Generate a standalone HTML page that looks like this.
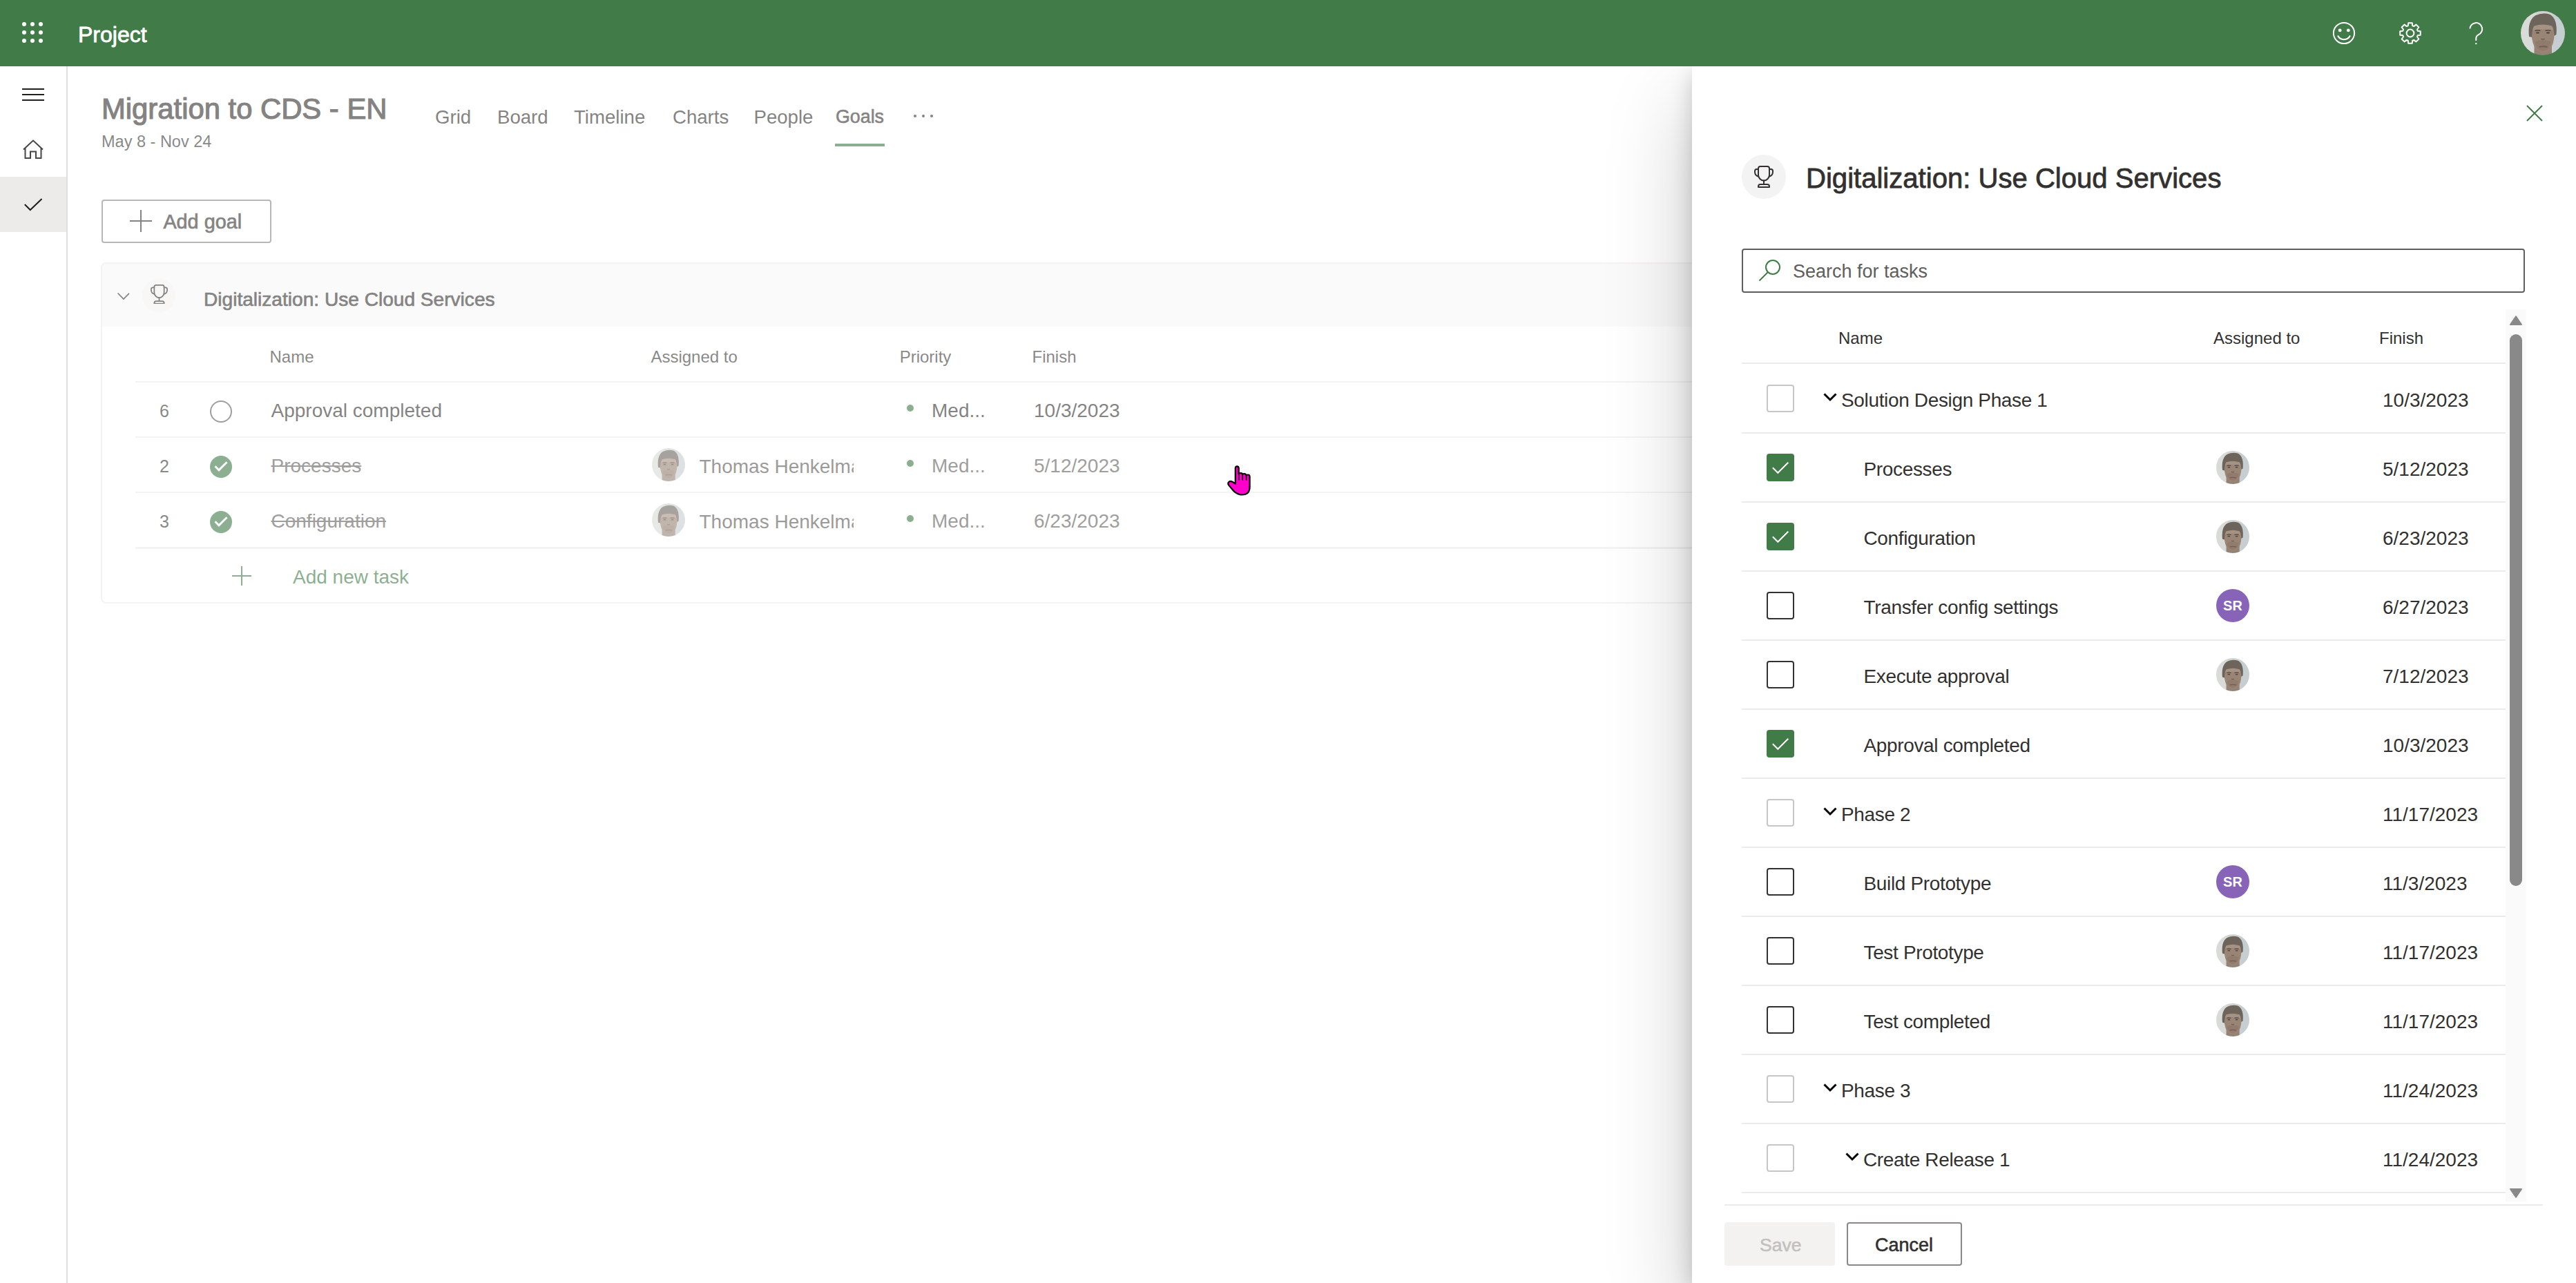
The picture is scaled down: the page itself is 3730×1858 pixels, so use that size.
<!DOCTYPE html><html><head><meta charset="utf-8"><style>
html,body{margin:0;padding:0;width:3730px;height:1858px;overflow:hidden;background:#fff}
body{position:relative;font-family:"Liberation Sans",sans-serif}
.t{position:absolute;line-height:1;white-space:nowrap}
</style></head><body>
<svg width="0" height="0" style="position:absolute"><defs>
<symbol id="trophy" viewBox="0 0 28 32"><g fill="none" stroke="#323130" stroke-width="2" stroke-linejoin="round" stroke-linecap="round">
<path d="M6 4Q6 1 9 1H19Q22 1 22 4V13A8 8.5 0 0 1 6 13Z"/><path d="M6 5H3.5Q1 5 1 8V9Q1 14 6 15.5"/><path d="M22 5H24.5Q27 5 27 8V9Q27 14 22 15.5"/>
<path d="M14 21.5V27"/><path d="M6 31H22V30Q22 27 19 27H9Q6 27 6 30Z"/></g></symbol>
<clipPath id="cc"><circle cx="32" cy="32" r="32"/></clipPath>
<filter id="bl" x="-10%" y="-10%" width="120%" height="120%"><feGaussianBlur stdDeviation="0.7"/></filter><symbol id="face" viewBox="0 0 64 64"><g clip-path="url(#cc)"><g filter="url(#bl)"><rect width="64" height="64" fill="#cfd3d1"/><rect x="0" width="22" height="64" fill="#d8dbd8"/><rect x="46" width="18" height="64" fill="#c6ced1"/>
<path d="M19.5 48H45V64H19.5Z" fill="#948274"/>
<path d="M15.5 25Q16 19 32 18.5Q48 19 48.5 26Q49.5 42 45 51Q41 60.5 32 60.5Q23.5 60.5 19.5 51Q15 42 15.5 25Z" fill="#9a8575"/>
<path d="M17 22Q32 17 48 22L47.5 28Q32 25 16.5 28Z" fill="#a69282"/>
<path d="M21 44Q32 40 43.5 44Q43 56 32 58Q21 56 21 44Z" fill="#8c786b" opacity=".8"/>
<path d="M12 37Q9.5 14 21 6.5Q32 1.5 42.5 5Q53.5 11.5 51.5 34L48.5 36Q48 25 45 21.5Q32 17.5 19.5 21.5Q16.5 25 16 38Z" fill="#6d655b"/>
<path d="M20.5 28.5Q24.5 27 28.5 28.5M35.5 28.5Q39.5 27 43.5 28.5" stroke="#4f4a44" stroke-width="1.6" fill="none"/>
<ellipse cx="24.5" cy="31.5" rx="2.6" ry="1.2" fill="#4a4a47"/><ellipse cx="39.5" cy="31.5" rx="2.6" ry="1.2" fill="#4a4a47"/>
<path d="M29.5 40Q32 42 34.5 40" stroke="#6d5a50" stroke-width="1.4" fill="none"/>
<path d="M26.5 52Q32 50.5 38.5 52" stroke="#7a5a52" stroke-width="1.8" fill="none"/></g></g></symbol>
</defs></svg>
<div style="position:absolute;left:0px;top:0px;width:3730px;height:96px;background:#417b48"></div><div style="position:absolute;left:32px;top:32px;width:6px;height:6px;background:#fff;border-radius:50%"></div><div style="position:absolute;left:32px;top:44px;width:6px;height:6px;background:#fff;border-radius:50%"></div><div style="position:absolute;left:32px;top:56px;width:6px;height:6px;background:#fff;border-radius:50%"></div><div style="position:absolute;left:44px;top:32px;width:6px;height:6px;background:#fff;border-radius:50%"></div><div style="position:absolute;left:44px;top:44px;width:6px;height:6px;background:#fff;border-radius:50%"></div><div style="position:absolute;left:44px;top:56px;width:6px;height:6px;background:#fff;border-radius:50%"></div><div style="position:absolute;left:56px;top:32px;width:6px;height:6px;background:#fff;border-radius:50%"></div><div style="position:absolute;left:56px;top:44px;width:6px;height:6px;background:#fff;border-radius:50%"></div><div style="position:absolute;left:56px;top:56px;width:6px;height:6px;background:#fff;border-radius:50%"></div><div class="t" style="left:113px;top:33.51px;font-size:32px;font-weight:400;color:#fff;-webkit-text-stroke:0.8px #fff;">Project</div><svg style="position:absolute;left:3376px;top:30px" width="36" height="36" viewBox="0 0 36 36"><circle cx="18" cy="18" r="15.1" fill="none" stroke="#fff" stroke-width="2"/><circle cx="12.2" cy="13.9" r="2.4" fill="#fff"/><circle cx="24.3" cy="13.9" r="2.4" fill="#fff"/><path d="M9 21.5a10 10 0 0 0 18 0" fill="none" stroke="#fff" stroke-width="2"/></svg><svg style="position:absolute;left:3474px;top:32px" width="32" height="32" viewBox="0 0 32 32"><path d="M12.73 5.29 L13.27 1.25 L18.73 1.25 L19.27 5.29 L21.26 6.11 L24.50 3.64 L28.36 7.50 L25.89 10.74 L26.71 12.73 L30.75 13.27 L30.75 18.73 L26.71 19.27 L25.89 21.26 L28.36 24.50 L24.50 28.36 L21.26 25.89 L19.27 26.71 L18.73 30.75 L13.27 30.75 L12.73 26.71 L10.74 25.89 L7.50 28.36 L3.64 24.50 L6.11 21.26 L5.29 19.27 L1.25 18.73 L1.25 13.27 L5.29 12.73 L6.11 10.74 L3.64 7.50 L7.50 3.64 L10.74 6.11Z" fill="none" stroke="#fff" stroke-width="2" stroke-linejoin="round"/><circle cx="16" cy="16" r="5.4" fill="none" stroke="#fff" stroke-width="2"/></svg><svg style="position:absolute;left:3570px;top:31px" width="30" height="36" viewBox="0 0 30 36"><path d="M6.4 10.5a8.9 8.9 0 1 1 12.6 8.6c-2.4 1.3-3.7 3-3.7 5.6V28" fill="none" stroke="#fff" stroke-width="2"/><rect x="14.3" y="31" width="2" height="2.2" fill="#fff"/></svg><svg style="position:absolute;left:3650px;top:16px" width="64" height="64" viewBox="0 0 64 64"><use href="#face"/></svg><div class="t" style="left:147px;top:136.61px;font-size:41.8px;font-weight:400;color:#323130;-webkit-text-stroke:1.2px #323130;">Migration to CDS - EN</div><div class="t" style="left:147px;top:194.10px;font-size:23.5px;font-weight:400;color:#3b3a39;">May 8 - Nov 24</div><div class="t" style="left:630px;top:155.63px;font-size:27.6px;font-weight:400;color:#323130;">Grid</div><div class="t" style="left:720px;top:155.63px;font-size:27.6px;font-weight:400;color:#323130;">Board</div><div class="t" style="left:831px;top:155.63px;font-size:27.6px;font-weight:400;color:#323130;">Timeline</div><div class="t" style="left:974px;top:155.63px;font-size:27.6px;font-weight:400;color:#323130;">Charts</div><div class="t" style="left:1091.5px;top:155.63px;font-size:27.6px;font-weight:400;color:#323130;">People</div><div class="t" style="left:1210px;top:156.31px;font-size:26.8px;font-weight:400;color:#323130;-webkit-text-stroke:0.6px #323130;">Goals</div><div style="position:absolute;left:1209px;top:208px;width:72px;height:4px;background:#417b48"></div><div style="position:absolute;left:1323px;top:166px;width:4px;height:4px;background:#323130;border-radius:50%"></div><div style="position:absolute;left:1335px;top:166px;width:4px;height:4px;background:#323130;border-radius:50%"></div><div style="position:absolute;left:1347px;top:166px;width:4px;height:4px;background:#323130;border-radius:50%"></div><div style="position:absolute;left:146.5px;top:288.5px;width:246px;height:63px;box-sizing:border-box;border:2px solid #8a8886;border-radius:4px;background:#fff"></div><svg style="position:absolute;left:188px;top:304px" width="32" height="32" viewBox="0 0 32 32"><path d="M16 0v32M0 16h32" stroke="#323130" stroke-width="2"/></svg><div class="t" style="left:236.4px;top:306.62px;font-size:28.8px;font-weight:400;color:#323130;-webkit-text-stroke:0.7px #323130;">Add goal</div><div style="position:absolute;left:146px;top:380px;width:2400px;height:494px;box-sizing:border-box;border:2px solid #edebe9;border-radius:8px;background:#fff"></div><div style="position:absolute;left:148px;top:382px;width:2400px;height:91px;background:#f7f7f7;border-radius:6px 0 0 0"></div><svg style="position:absolute;left:168px;top:421px" width="22" height="16" viewBox="0 0 22 16"><path d="M2.6 3.5l8.3 8.5 8.1-8.2" fill="none" stroke="#323130" stroke-width="1.7"/></svg><div style="position:absolute;left:206px;top:404px;width:48px;height:48px;background:#f3f2f1;border-radius:50%"></div><svg style="position:absolute;left:217.5px;top:411.9px" width="25" height="28.6" viewBox="0 0 28 32"><use href="#trophy"/></svg><div class="t" style="left:295px;top:419.71px;font-size:28.1px;font-weight:400;color:#323130;-webkit-text-stroke:0.7px #323130;">Digitalization: Use Cloud Services</div><div class="t" style="left:390.5px;top:504.68px;font-size:24px;font-weight:400;color:#3b3a39;">Name</div><div class="t" style="left:942.4px;top:504.68px;font-size:24px;font-weight:400;color:#3b3a39;">Assigned to</div><div class="t" style="left:1302.7px;top:504.68px;font-size:24px;font-weight:400;color:#3b3a39;">Priority</div><div class="t" style="left:1494.5px;top:504.68px;font-size:24px;font-weight:400;color:#3b3a39;">Finish</div><div style="position:absolute;left:196px;top:552px;width:2300px;height:2px;background:#edebe9"></div><div class="t" style="left:231px;top:583.33px;font-size:25px;font-weight:400;color:#3b3a39;">6</div><div style="position:absolute;left:304px;top:579.5px;width:32px;height:32px;box-sizing:border-box;border:2px solid #605e5c;border-radius:50%"></div><div class="t" style="left:392.5px;top:581.29px;font-size:28px;font-weight:400;color:#323130;">Approval completed</div><div style="position:absolute;left:1313px;top:586px;width:10px;height:10px;background:#417b48;border-radius:50%"></div><div class="t" style="left:1349px;top:581.29px;font-size:28px;font-weight:400;color:#323130;">Med...</div><div class="t" style="left:1497px;top:581.29px;font-size:28px;font-weight:400;color:#323130;">10/3/2023</div><div style="position:absolute;left:196px;top:632px;width:2300px;height:2px;background:#edebe9"></div><div class="t" style="left:231px;top:663.33px;font-size:25px;font-weight:400;color:#3b3a39;">2</div><div style="position:absolute;left:304px;top:659.5px;width:32px;height:32px;background:#417b48;border-radius:50%"><svg width="32" height="32" viewBox="0 0 32 32"><path d="M7.5 15.3L13 20.8L24.5 9.3" fill="none" stroke="#fff" stroke-width="3"/></svg></div><div class="t" style="left:392.5px;top:661.29px;font-size:28px;font-weight:400;color:#605e5c;text-decoration:line-through;">Processes</div><svg style="position:absolute;left:944px;top:649px" width="48" height="48" viewBox="0 0 64 64"><use href="#face"/></svg><div class="t" style="left:1012.5px;top:661.79px;font-size:28px;color:#5a5856;width:223px;overflow:hidden">Thomas Henkelman</div><div style="position:absolute;left:1313px;top:666px;width:10px;height:10px;background:#417b48;border-radius:50%"></div><div class="t" style="left:1349px;top:661.29px;font-size:28px;font-weight:400;color:#605e5c;">Med...</div><div class="t" style="left:1497px;top:661.29px;font-size:28px;font-weight:400;color:#605e5c;">5/12/2023</div><div style="position:absolute;left:196px;top:712px;width:2300px;height:2px;background:#edebe9"></div><div class="t" style="left:231px;top:743.33px;font-size:25px;font-weight:400;color:#3b3a39;">3</div><div style="position:absolute;left:304px;top:739.5px;width:32px;height:32px;background:#417b48;border-radius:50%"><svg width="32" height="32" viewBox="0 0 32 32"><path d="M7.5 15.3L13 20.8L24.5 9.3" fill="none" stroke="#fff" stroke-width="3"/></svg></div><div class="t" style="left:392.5px;top:741.29px;font-size:28px;font-weight:400;color:#605e5c;text-decoration:line-through;">Configuration</div><svg style="position:absolute;left:944px;top:729px" width="48" height="48" viewBox="0 0 64 64"><use href="#face"/></svg><div class="t" style="left:1012.5px;top:741.79px;font-size:28px;color:#5a5856;width:223px;overflow:hidden">Thomas Henkelman</div><div style="position:absolute;left:1313px;top:746px;width:10px;height:10px;background:#417b48;border-radius:50%"></div><div class="t" style="left:1349px;top:741.29px;font-size:28px;font-weight:400;color:#605e5c;">Med...</div><div class="t" style="left:1497px;top:741.29px;font-size:28px;font-weight:400;color:#605e5c;">6/23/2023</div><div style="position:absolute;left:196px;top:792px;width:2300px;height:3px;background:#edebe9"></div><svg style="position:absolute;left:336px;top:820px" width="28" height="28" viewBox="0 0 28 28"><path d="M14 0v28M0 14h28" stroke="#417b48" stroke-width="2"/></svg><div class="t" style="left:424px;top:822.29px;font-size:28px;font-weight:400;color:#417b48;">Add new task</div><div style="position:absolute;left:98px;top:96px;width:3632px;height:1762px;background:rgba(255,255,255,.4)"></div><svg style="position:absolute;left:1765px;top:660px" width="60" height="65" viewBox="0 0 60 65"><path d="M23.8 37.5V18Q23.8 15.3 26.2 15.3Q28.7 15.3 28.7 18V26.5Q28.7 25 31.4 25Q34 25 34 27.2Q34 26 36.7 26Q39.3 26 39.3 28.4Q39.3 27.5 42 27.5Q44.6 27.5 44.6 30.2V45Q44.6 56.4 33.2 56.4Q26.5 56.4 21.3 51L14.2 42.6Q12.6 40.6 13.8 38.6Q15.6 36.2 18.4 37.2Q20.5 38 23.8 40.5Z" fill="#ff00cc" stroke="#000" stroke-width="2.2" stroke-linejoin="round"/><path d="M29 26.5V35.5M34.3 27.5V35.5M39.6 28.5V35.5" stroke="#000" stroke-width="1.6"/></svg><div style="position:absolute;left:0px;top:96px;width:96px;height:1762px;background:#fff;border-right:2px solid #e1dfdd"></div><div style="position:absolute;left:32px;top:128px;width:32px;height:2px;background:#201f1e"></div><div style="position:absolute;left:32px;top:136px;width:32px;height:2px;background:#201f1e"></div><div style="position:absolute;left:32px;top:144px;width:32px;height:2px;background:#201f1e"></div><svg style="position:absolute;left:32px;top:200px" width="32" height="32" viewBox="0 0 32 32"><path d="M2 16.5L16 3.5l14 13M4.5 14V29H12V19.5H20V29H27.5V14" fill="none" stroke="#484644" stroke-width="2"/></svg><div style="position:absolute;left:0px;top:256px;width:96px;height:80px;background:#edebe9"></div><svg style="position:absolute;left:33px;top:284px" width="28" height="24" viewBox="0 0 28 24"><path d="M2.8 12l8 8L27.5 4" fill="none" stroke="#201f1e" stroke-width="2"/></svg><div style="position:absolute;left:0;top:96px;width:3730px;height:1762px;overflow:hidden"><div style="position:absolute;left:2450px;top:0;width:1280px;height:1762px;background:#fff;box-shadow:0 51px 115px rgba(0,0,0,.22),0 10px 29px rgba(0,0,0,.18)"></div></div><svg style="position:absolute;left:3658px;top:152px" width="24" height="24" viewBox="0 0 24 24"><path d="M1 1l22 22M23 1L1 23" stroke="#417b48" stroke-width="2"/></svg><div style="position:absolute;left:2522px;top:224px;width:64px;height:64px;background:#f3f3f3;border-radius:50%"></div><svg style="position:absolute;left:2540.2px;top:239.9px" width="28" height="32" viewBox="0 0 28 32"><use href="#trophy"/></svg><div class="t" style="left:2615px;top:238.05px;font-size:40.1px;font-weight:400;color:#323130;-webkit-text-stroke:0.8px #323130;">Digitalization: Use Cloud Services</div><div style="position:absolute;left:2522px;top:360px;width:1134px;height:64px;box-sizing:border-box;border:2px solid #605e5c;border-radius:4px"></div><svg style="position:absolute;left:2546px;top:374px" width="34" height="34" viewBox="0 0 34 34"><circle cx="21" cy="13" r="10" fill="none" stroke="#417b48" stroke-width="2"/><path d="M14 20L1.5 32.5" stroke="#417b48" stroke-width="2"/></svg><div class="t" style="left:2596px;top:380.14px;font-size:27px;font-weight:400;color:#605e5c;">Search for tasks</div><div class="t" style="left:2662px;top:478.18px;font-size:24px;font-weight:400;color:#323130;">Name</div><div class="t" style="left:3205px;top:478.18px;font-size:24px;font-weight:400;color:#323130;">Assigned to</div><div class="t" style="left:3445px;top:478.18px;font-size:24px;font-weight:400;color:#323130;">Finish</div><div style="position:absolute;left:2522px;top:525px;width:1106px;height:2px;background:#edebe9"></div><div style="position:absolute;left:2558px;top:557px;width:40px;height:40px;box-sizing:border-box;border:2px solid #c8c6c4;border-radius:4px"></div><svg style="position:absolute;left:2640px;top:569px" width="20" height="13" viewBox="0 0 20 13"><path d="M1.5 1.5l8.5 8.5 8.5-8.5" fill="none" stroke="#000" stroke-width="3"/></svg><div class="t" style="left:2666px;top:565.79px;font-size:28px;font-weight:400;color:#323130;letter-spacing:-0.35px;">Solution Design Phase 1</div><div class="t" style="left:3450px;top:565.79px;font-size:28px;font-weight:400;color:#323130;">10/3/2023</div><div style="position:absolute;left:2522px;top:626px;width:1106px;height:2px;background:#edebe9"></div><div style="position:absolute;left:2558px;top:657px;width:40px;height:40px;background:#417b48;border-radius:4px"><svg width="40" height="40" viewBox="0 0 40 40"><path d="M8.8 20.3l7.5 7.5 15-15" fill="none" stroke="#fff" stroke-width="2"/></svg></div><div class="t" style="left:2698.5px;top:665.79px;font-size:28px;font-weight:400;color:#323130;letter-spacing:-0.35px;">Processes</div><svg style="position:absolute;left:3209px;top:653px" width="48" height="48" viewBox="0 0 64 64"><use href="#face"/></svg><div class="t" style="left:3450px;top:665.79px;font-size:28px;font-weight:400;color:#323130;">5/12/2023</div><div style="position:absolute;left:2522px;top:726px;width:1106px;height:2px;background:#edebe9"></div><div style="position:absolute;left:2558px;top:757px;width:40px;height:40px;background:#417b48;border-radius:4px"><svg width="40" height="40" viewBox="0 0 40 40"><path d="M8.8 20.3l7.5 7.5 15-15" fill="none" stroke="#fff" stroke-width="2"/></svg></div><div class="t" style="left:2698.5px;top:765.79px;font-size:28px;font-weight:400;color:#323130;letter-spacing:-0.35px;">Configuration</div><svg style="position:absolute;left:3209px;top:753px" width="48" height="48" viewBox="0 0 64 64"><use href="#face"/></svg><div class="t" style="left:3450px;top:765.79px;font-size:28px;font-weight:400;color:#323130;">6/23/2023</div><div style="position:absolute;left:2522px;top:826px;width:1106px;height:2px;background:#edebe9"></div><div style="position:absolute;left:2558px;top:857px;width:40px;height:40px;box-sizing:border-box;border:2px solid #323130;border-radius:4px"></div><div class="t" style="left:2698.5px;top:865.79px;font-size:28px;font-weight:400;color:#323130;letter-spacing:-0.35px;">Transfer config settings</div><div style="position:absolute;left:3209px;top:853px;width:48px;height:48px;background:#8764b8;border-radius:50%;color:#fff;font-weight:700;font-size:20px;line-height:49px;text-align:center">SR</div><div class="t" style="left:3450px;top:865.79px;font-size:28px;font-weight:400;color:#323130;">6/27/2023</div><div style="position:absolute;left:2522px;top:926px;width:1106px;height:2px;background:#edebe9"></div><div style="position:absolute;left:2558px;top:957px;width:40px;height:40px;box-sizing:border-box;border:2px solid #323130;border-radius:4px"></div><div class="t" style="left:2698.5px;top:965.79px;font-size:28px;font-weight:400;color:#323130;letter-spacing:-0.35px;">Execute approval</div><svg style="position:absolute;left:3209px;top:953px" width="48" height="48" viewBox="0 0 64 64"><use href="#face"/></svg><div class="t" style="left:3450px;top:965.79px;font-size:28px;font-weight:400;color:#323130;">7/12/2023</div><div style="position:absolute;left:2522px;top:1026px;width:1106px;height:2px;background:#edebe9"></div><div style="position:absolute;left:2558px;top:1057px;width:40px;height:40px;background:#417b48;border-radius:4px"><svg width="40" height="40" viewBox="0 0 40 40"><path d="M8.8 20.3l7.5 7.5 15-15" fill="none" stroke="#fff" stroke-width="2"/></svg></div><div class="t" style="left:2698.5px;top:1065.79px;font-size:28px;font-weight:400;color:#323130;letter-spacing:-0.35px;">Approval completed</div><div class="t" style="left:3450px;top:1065.79px;font-size:28px;font-weight:400;color:#323130;">10/3/2023</div><div style="position:absolute;left:2522px;top:1126px;width:1106px;height:2px;background:#edebe9"></div><div style="position:absolute;left:2558px;top:1157px;width:40px;height:40px;box-sizing:border-box;border:2px solid #c8c6c4;border-radius:4px"></div><svg style="position:absolute;left:2640px;top:1169px" width="20" height="13" viewBox="0 0 20 13"><path d="M1.5 1.5l8.5 8.5 8.5-8.5" fill="none" stroke="#000" stroke-width="3"/></svg><div class="t" style="left:2666px;top:1165.79px;font-size:28px;font-weight:400;color:#323130;letter-spacing:-0.35px;">Phase 2</div><div class="t" style="left:3450px;top:1165.79px;font-size:28px;font-weight:400;color:#323130;">11/17/2023</div><div style="position:absolute;left:2522px;top:1226px;width:1106px;height:2px;background:#edebe9"></div><div style="position:absolute;left:2558px;top:1257px;width:40px;height:40px;box-sizing:border-box;border:2px solid #323130;border-radius:4px"></div><div class="t" style="left:2698.5px;top:1265.79px;font-size:28px;font-weight:400;color:#323130;letter-spacing:-0.35px;">Build Prototype</div><div style="position:absolute;left:3209px;top:1253px;width:48px;height:48px;background:#8764b8;border-radius:50%;color:#fff;font-weight:700;font-size:20px;line-height:49px;text-align:center">SR</div><div class="t" style="left:3450px;top:1265.79px;font-size:28px;font-weight:400;color:#323130;">11/3/2023</div><div style="position:absolute;left:2522px;top:1326px;width:1106px;height:2px;background:#edebe9"></div><div style="position:absolute;left:2558px;top:1357px;width:40px;height:40px;box-sizing:border-box;border:2px solid #323130;border-radius:4px"></div><div class="t" style="left:2698.5px;top:1365.79px;font-size:28px;font-weight:400;color:#323130;letter-spacing:-0.35px;">Test Prototype</div><svg style="position:absolute;left:3209px;top:1353px" width="48" height="48" viewBox="0 0 64 64"><use href="#face"/></svg><div class="t" style="left:3450px;top:1365.79px;font-size:28px;font-weight:400;color:#323130;">11/17/2023</div><div style="position:absolute;left:2522px;top:1426px;width:1106px;height:2px;background:#edebe9"></div><div style="position:absolute;left:2558px;top:1457px;width:40px;height:40px;box-sizing:border-box;border:2px solid #323130;border-radius:4px"></div><div class="t" style="left:2698.5px;top:1465.79px;font-size:28px;font-weight:400;color:#323130;letter-spacing:-0.35px;">Test completed</div><svg style="position:absolute;left:3209px;top:1453px" width="48" height="48" viewBox="0 0 64 64"><use href="#face"/></svg><div class="t" style="left:3450px;top:1465.79px;font-size:28px;font-weight:400;color:#323130;">11/17/2023</div><div style="position:absolute;left:2522px;top:1526px;width:1106px;height:2px;background:#edebe9"></div><div style="position:absolute;left:2558px;top:1557px;width:40px;height:40px;box-sizing:border-box;border:2px solid #c8c6c4;border-radius:4px"></div><svg style="position:absolute;left:2640px;top:1569px" width="20" height="13" viewBox="0 0 20 13"><path d="M1.5 1.5l8.5 8.5 8.5-8.5" fill="none" stroke="#000" stroke-width="3"/></svg><div class="t" style="left:2666px;top:1565.79px;font-size:28px;font-weight:400;color:#323130;letter-spacing:-0.35px;">Phase 3</div><div class="t" style="left:3450px;top:1565.79px;font-size:28px;font-weight:400;color:#323130;">11/24/2023</div><div style="position:absolute;left:2522px;top:1626px;width:1106px;height:2px;background:#edebe9"></div><div style="position:absolute;left:2558px;top:1657px;width:40px;height:40px;box-sizing:border-box;border:2px solid #c8c6c4;border-radius:4px"></div><svg style="position:absolute;left:2672px;top:1669px" width="20" height="13" viewBox="0 0 20 13"><path d="M1.5 1.5l8.5 8.5 8.5-8.5" fill="none" stroke="#000" stroke-width="3"/></svg><div class="t" style="left:2698px;top:1665.79px;font-size:28px;font-weight:400;color:#323130;letter-spacing:-0.35px;">Create Release 1</div><div class="t" style="left:3450px;top:1665.79px;font-size:28px;font-weight:400;color:#323130;">11/24/2023</div><div style="position:absolute;left:2522px;top:1726px;width:1106px;height:2px;background:#edebe9"></div><div style="position:absolute;left:3628px;top:448px;width:30px;height:1292px;background:#fafafa"></div><div style="position:absolute;left:3634px;top:484px;width:18px;height:799px;background:#898989;border-radius:9px"></div><svg style="position:absolute;left:3634px;top:457px" width="18" height="14" viewBox="0 0 18 14"><path d="M9 1.2L17 13H1z" fill="#898989" stroke="#898989" stroke-linejoin="round" stroke-width="2"/></svg><svg style="position:absolute;left:3634px;top:1721px" width="18" height="14" viewBox="0 0 18 14"><path d="M9 12.8L17 1H1z" fill="#898989" stroke="#898989" stroke-linejoin="round" stroke-width="2"/></svg><div style="position:absolute;left:2497px;top:1744px;width:1185px;height:2px;background:#edebe9"></div><div style="position:absolute;left:2497px;top:1770px;width:160px;height:63px;background:#f3f2f1;border-radius:4px"></div><div class="t" style="left:2548px;top:1790.06px;font-size:26.5px;font-weight:400;color:#c2c0be;-webkit-text-stroke:0.55px #c2c0be;">Save</div><div style="position:absolute;left:2674px;top:1770px;width:167px;height:63px;box-sizing:border-box;border:2px solid #8a8886;border-radius:4px"></div><div class="t" style="left:2715px;top:1789.64px;font-size:27px;font-weight:400;color:#323130;-webkit-text-stroke:0.6px #323130;">Cancel</div>
</body></html>
